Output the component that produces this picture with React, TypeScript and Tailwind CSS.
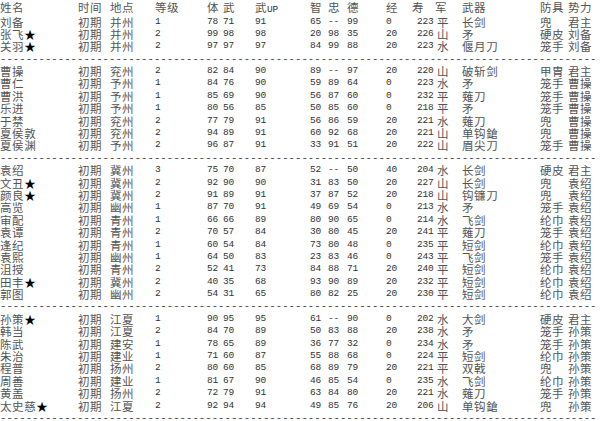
import React from "react";

type Row = [string, string, string, string, string, string, string, string, string, string, string, string, string, string, string, string];

const groups: Row[][] = [
  [
    ["刘备", "初期", "并州", "1", "78", "71", "91", "65", "--", "99", "0", "223", "平", "长剑", "兜", "君主"],
    ["张飞★", "初期", "并州", "2", "99", "98", "98", "20", "98", "35", "20", "226", "山", "矛", "硬皮", "刘备"],
    ["关羽★", "初期", "并州", "2", "97", "97", "97", "84", "99", "88", "20", "223", "水", "偃月刀", "笼手", "刘备"],
  ],
  [
    ["曹操", "初期", "兖州", "2", "82", "84", "90", "89", "--", "97", "20", "220", "山", "破斩剑", "甲胄", "君主"],
    ["曹仁", "初期", "予州", "1", "84", "76", "90", "59", "89", "64", "0", "223", "水", "矛", "笼手", "曹操"],
    ["曹洪", "初期", "予州", "1", "85", "69", "90", "56", "87", "60", "0", "232", "平", "薙刀", "笼手", "曹操"],
    ["乐进", "初期", "予州", "1", "80", "56", "85", "50", "85", "60", "0", "218", "平", "矛", "笼手", "曹操"],
    ["于禁", "初期", "兖州", "2", "77", "79", "91", "56", "86", "59", "20", "221", "水", "薙刀", "兜", "曹操"],
    ["夏侯敦", "初期", "兖州", "2", "94", "89", "91", "60", "92", "68", "20", "221", "山", "单钩鎗", "兜", "曹操"],
    ["夏侯渊", "初期", "予州", "2", "96", "87", "91", "33", "91", "51", "20", "222", "山", "眉尖刀", "笼手", "曹操"],
  ],
  [
    ["袁绍", "初期", "冀州", "3", "75", "70", "87", "52", "--", "50", "40", "204", "水", "长剑", "硬皮", "君主"],
    ["文丑★", "初期", "冀州", "2", "92", "90", "90", "31", "83", "50", "20", "227", "山", "长剑", "兜", "袁绍"],
    ["颜良★", "初期", "冀州", "2", "91", "89", "91", "37", "87", "52", "20", "218", "山", "钩镰刀", "兜", "袁绍"],
    ["高览", "初期", "幽州", "1", "87", "70", "91", "49", "69", "54", "0", "213", "水", "矛", "笼手", "袁绍"],
    ["审配", "初期", "青州", "1", "66", "66", "89", "80", "90", "65", "0", "214", "水", "飞剑", "纶巾", "袁绍"],
    ["袁谭", "初期", "青州", "2", "70", "57", "84", "30", "80", "45", "20", "241", "平", "薙刀", "笼手", "袁绍"],
    ["逢纪", "初期", "青州", "1", "60", "54", "84", "73", "80", "48", "0", "235", "平", "短剑", "纶巾", "袁绍"],
    ["袁熙", "初期", "幽州", "1", "64", "50", "83", "23", "83", "46", "0", "243", "平", "飞剑", "笼手", "袁绍"],
    ["沮授", "初期", "青州", "2", "52", "41", "73", "84", "88", "71", "20", "240", "平", "短剑", "纶巾", "袁绍"],
    ["田丰★", "初期", "冀州", "2", "40", "35", "68", "93", "90", "89", "20", "232", "平", "短剑", "纶巾", "袁绍"],
    ["郭图", "初期", "幽州", "2", "54", "31", "65", "80", "82", "25", "20", "230", "平", "短剑", "纶巾", "袁绍"],
  ],
  [
    ["孙策★", "初期", "江夏", "1", "90", "95", "95", "61", "--", "90", "0", "202", "水", "大剑", "硬皮", "君主"],
    ["韩当", "初期", "江夏", "2", "84", "70", "89", "50", "83", "88", "20", "238", "水", "矛", "笼手", "孙策"],
    ["陈武", "初期", "建安", "1", "78", "65", "89", "36", "77", "32", "0", "234", "水", "矛", "笼手", "孙策"],
    ["朱治", "初期", "建业", "1", "71", "60", "87", "55", "88", "68", "0", "224", "平", "短剑", "纶巾", "孙策"],
    ["程普", "初期", "扬州", "2", "80", "60", "85", "68", "89", "79", "20", "221", "平", "双戟", "兜", "孙策"],
    ["周善", "初期", "建业", "1", "81", "67", "90", "46", "85", "54", "0", "235", "水", "飞剑", "纶巾", "孙策"],
    ["黄盖", "初期", "扬州", "2", "72", "79", "91", "63", "84", "80", "20", "221", "水", "薙刀", "笼手", "孙策"],
    ["太史慈★", "初期", "江夏", "2", "92", "94", "94", "49", "85", "76", "20", "206", "山", "单钩鎗", "兜", "孙策"],
  ],
];

// column widths, left to right
const W = [
  "w-[78px]",
  "w-[32px]",
  "w-[45px]",
  "w-[52px]",
  "w-[16px]",
  "w-[32px]",
  "w-[55px]",
  "w-[18px]",
  "w-[19px]",
  "w-[39px]",
  "w-[26px]",
  "w-[23px]",
  "w-[27px]",
  "w-[78px]",
  "w-[28px]",
  "w-[32px]",
];

const cjk = "font-['Noto_Sans_CJK_SC',sans-serif] text-[11.5px] tracking-[0.6px] text-[#555]";
const mono = "font-['Liberation_Mono','Noto_Sans_CJK_SC',monospace] text-[9.5px] tracking-[-0.2px] text-[#333]";

function Name({ name }: { name: string }) {
  const star = name.endsWith("★");
  return (
    <span className={`${W[0]} shrink-0 ${cjk}`}>
      {star ? name.slice(0, -1) : name}
      {star && <span className="text-black">★</span>}
    </span>
  );
}

function DataRow({ r }: { r: Row }) {
  const isNum = (i: number) => i >= 3 && i <= 11;
  return (
    <div className="flex h-[12.4px] items-center whitespace-nowrap leading-[12.4px]">
      <Name name={r[0]} />
      {r.slice(1).map((v, k) => {
        const i = k + 1;
        const pad = i === 11 ? "pl-[5px]" : i === 12 ? "pl-[2px]" : "";
        return (
          <span key={i} className={`${W[i]} shrink-0 ${pad} ${isNum(i) ? mono : cjk}`}>
            {v}
          </span>
        );
      })}
    </div>
  );
}

function Divider() {
  return (
    <div className="h-[12.4px] overflow-hidden whitespace-nowrap font-['Liberation_Mono',monospace] text-[10.7px] leading-[12.4px] text-[#444]">
      {"-".repeat(93)}
    </div>
  );
}

const heads = ["姓名", "时间", "地点", "等级", "体", "武", "", "智", "忠", "德", "经", "寿", "军", "武器", "防具", "势力"];

export default function App() {
  return (
    <div className="h-[421px] w-[600px] overflow-hidden bg-white">
      <div className="flex h-[15.5px] items-start whitespace-nowrap leading-[14.5px]">
        {heads.map((h, i) => (
          <span key={i} className={`${W[i]} shrink-0 ${cjk}`}>
            {i === 6 ? (
              <>
                武<span className={mono}>UP</span>
              </>
            ) : (
              h
            )}
          </span>
        ))}
      </div>
      {groups.map((g, gi) => (
        <div key={gi}>
          {g.map((r, ri) => (
            <DataRow key={ri} r={r} />
          ))}
          <Divider />
        </div>
      ))}
    </div>
  );
}
